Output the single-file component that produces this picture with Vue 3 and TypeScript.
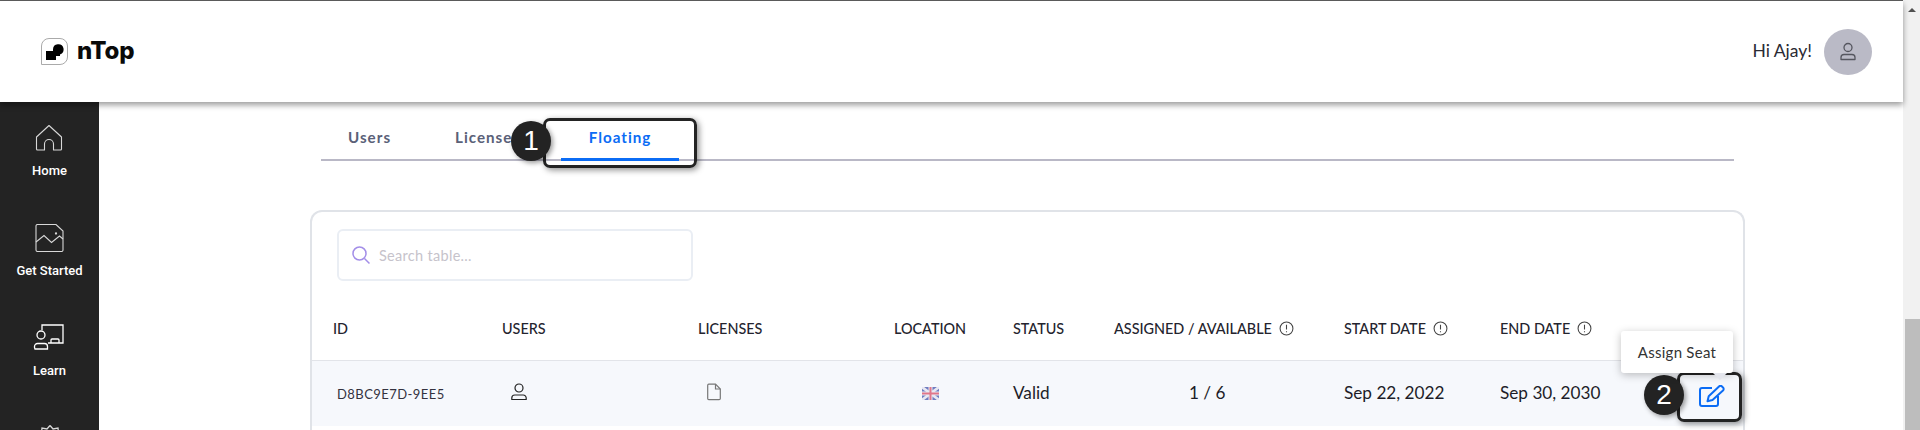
<script setup lang="ts">
const navItems = ['Home', 'Get Started', 'Learn']
</script>

<template>
  <div class="page">
    <div class="main">
      <header class="header">
        <div class="brand">
          <svg class="logo" width="27" height="27" viewBox="0 0 27 27">
            <path d="M.5 26.5V8A7.500 7.500 0 0 1 8 .5h11A7.500 7.500 0 0 1 26.500 8v11a7.500 7.500 0 0 1-7.500 7.500z" fill="#fff" stroke="#aaa" />
            <path d="M5 22V13h7V11.500a5.300 5.300 0 1 1 7 5V18h-4v4z" fill="#000" />
          </svg>
          <span class="brand-name">nTop</span>
        </div>
        <div class="user">
          <span class="hi">Hi Ajay!</span>
          <span class="avatar">
            <svg width="20" height="20" viewBox="0 0 20 20" fill="none" stroke="#55565f" stroke-width="1.300">
              <circle cx="10" cy="5.500" r="4" />
              <path d="M3 17.500v-2a3 3 0 0 1 3-3h8a3 3 0 0 1 3 3v2z" stroke-linejoin="round" />
            </svg>
          </span>
        </div>
      </header>
      <div class="below">
        <nav class="sidebar">
          <div v-for="(item, i) in navItems" :key="item" class="nav-item">
            <svg v-if="i === 0" width="28" height="28" viewBox="0 0 28 28" fill="none" stroke="#d8d8d8" stroke-width="1.100">
              <path d="M14 1.500 1.500 13v12a1 1 0 0 0 1 1h7V20a4.500 4.500 0 0 1 9 0v6h7a1 1 0 0 0 1-1V13z" stroke-linejoin="round" />
            </svg>
            <svg v-else-if="i === 1" width="29" height="28" viewBox="0 0 29 28" fill="none" stroke="#d8d8d8" stroke-width="1.100">
              <path d="M2.500.5h18.500l7 6.500v19a1.500 1.500 0 0 1-1.500 1.500H2.500A1.500 1.500 0 0 1 1 26V2A1.500 1.500 0 0 1 2.500.5z" />
              <path d="M1 18 9 11.500l7.500 7 8-6.500 3.500 3" />
              <circle cx="21" cy="9.500" r=".6" />
            </svg>
            <svg v-else width="32" height="28" viewBox="0 0 32 28" fill="none" stroke="#fff" stroke-width="1.300">
              <path d="M9 6V1h21v18h-15" />
              <circle cx="8" cy="11" r="4" />
              <path d="M1.500 23.500v-1a3 3 0 0 1 3-3h7a3 3 0 0 1 3 3v2.500H2z" />
              <path d="M18 19v-3a1 1 0 0 1 1-1h6a1 1 0 0 1 1 1v3" />
            </svg>
            <span class="nav-label">{{ item }}</span>
          </div>
          <div class="nav-item">
            <svg width="26" height="26" viewBox="0 0 26 26" fill="none" stroke="#d8d8d8" stroke-width="1.300">
              <path d="M13 1.500 16 5l5-1 .5 5 3 3-3 4" />
              <path d="M13 1.500 10 5 5 4 4.500 9l-3 3 3 4" />
            </svg>
          </div>
        </nav>
        <main class="content">
          <div class="tabs">
            <span class="tab">Users</span>
            <span class="tab tab-licenses">Licenses</span>
            <span class="tab tab-active">Floating</span>
          </div>
          <section class="card">
            <div class="search">
              <svg width="20" height="20" viewBox="0 0 20 20" fill="none" stroke="#a38ee8" stroke-width="1.500">
                <circle cx="8.500" cy="8.500" r="6.500" />
                <path d="m13.500 13.500 5 5" />
              </svg>
              <span class="placeholder">Search table...</span>
            </div>
            <div class="table-row table-head">
              <span>ID</span>
              <span>USERS</span>
              <span>LICENSES</span>
              <span>LOCATION</span>
              <span>STATUS</span>
              <span class="with-info">ASSIGNED / AVAILABLE
                <svg class="info" width="15" height="15" viewBox="0 0 14 14" fill="none" stroke="#444" stroke-width="1">
                  <circle cx="7" cy="7" r="6" />
                  <path d="M7 3.500v4.500M7 9.500v1" />
                </svg>
              </span>
              <span class="with-info">START DATE
                <svg class="info" width="15" height="15" viewBox="0 0 14 14" fill="none" stroke="#444" stroke-width="1">
                  <circle cx="7" cy="7" r="6" />
                  <path d="M7 3.500v4.500M7 9.500v1" />
                </svg>
              </span>
              <span class="with-info">END DATE
                <svg class="info" width="15" height="15" viewBox="0 0 14 14" fill="none" stroke="#444" stroke-width="1">
                  <circle cx="7" cy="7" r="6" />
                  <path d="M7 3.500v4.500M7 9.500v1" />
                </svg>
              </span>
            </div>
            <div class="table-row table-body">
              <span class="cell-id">D8BC9E7D-9EE5</span>
              <span class="cell-user">
                <svg width="18" height="18" viewBox="0 0 18 18" fill="none" stroke="#222" stroke-width="1.200">
                  <circle cx="9" cy="5" r="4" />
                  <path d="M1.800 16.500v-1.500a3 3 0 0 1 3-3h8.400a3 3 0 0 1 3 3v1.500z" stroke-linejoin="round" />
                </svg>
              </span>
              <span class="cell-file">
                <svg width="14" height="18" viewBox="0 0 14 17" fill="none" stroke="#777" stroke-width="1.200">
                  <path d="M1.800.700h6.700l4.800 4.800v9.500a1.200 1.200 0 0 1-1.200 1.200H1.800A1.200 1.200 0 0 1 .700 15V1.900A1.200 1.200 0 0 1 1.800.700z" />
                  <path d="M8.500.700v4.800h4.800" />
                </svg>
              </span>
              <span class="cell-flag">
                <svg width="17" height="13" viewBox="0 0 17 13">
                  <rect width="17" height="13" fill="#6f7cc0" />
                  <path d="M0 0l17 13M17 0 0 13" stroke="#e8e8f2" stroke-width="2.600" />
                  <path d="M8.500 0v13M0 6.500h17" stroke="#e8e8f2" stroke-width="4" />
                  <path d="M8.500 0v13M0 6.500h17" stroke="#e0768a" stroke-width="2" />
                </svg>
              </span>
              <span class="cell-text">Valid</span>
              <span class="cell-text cell-count">1 / 6</span>
              <span class="cell-text">Sep 22, 2022</span>
              <span class="cell-text">Sep 30, 2030</span>
            </div>
          </section>
        </main>
      </div>
      <span class="overlay cell-edit">
        <svg width="26" height="22" viewBox="0 0 26 22" fill="none" stroke="#0b6cf5" stroke-width="2">
          <path d="M13 3H3a2 2 0 0 0-2 2v14a2 2 0 0 0 2 2h14a2 2 0 0 0 2-2v-8" />
          <path d="M20 1.500a2 2 0 0 1 3 0l1 1a2 2 0 0 1 0 3L13.500 15l-5 1.200 1.200-5z" stroke-linejoin="round" />
        </svg>
      </span>
      <div class="overlay callout-tab"></div>
      <div class="overlay callout-edit"></div>
      <div class="overlay badge badge-one">1</div>
      <div class="overlay badge badge-two">2</div>
      <div class="overlay tooltip">Assign Seat<i class="tip-arrow"></i></div>
    </div>
    <aside class="scrollbar">
      <span class="arrow"></span>
      <span class="thumb"></span>
    </aside>
  </div>
</template>

<style>
html, body { margin: 0; background: #fff; overflow: hidden; }
</style>

<style scoped>
.page { display: flex; width: 1920px; height: 430px; overflow: hidden; font-family: Lato, "Liberation Sans", sans-serif; color: #222; background: #fff; }
.main { position: relative; flex: 1; min-width: 0; display: flex; flex-direction: column; border-top: 1px solid #5f5f5f; }
.header { position: relative; z-index: 2; flex: none; height: 101px; box-sizing: border-box; padding: 0 31px 0 41px; display: flex; align-items: center; justify-content: space-between; background: #fff; box-shadow: 0 3px 6px rgba(0, 0, 0, .4); }
.brand { display: flex; align-items: center; gap: 9px; }
.logo { display: block; margin-top: -1px; }
.brand-name { font: 800 24px Inter, Roboto, sans-serif; color: #0a0a0a; letter-spacing: -.2px; margin-top: -2px; }
.user { display: flex; align-items: center; gap: 12px; }
.hi { font-size: 17.500px; color: #2a2a33; margin-top: -3px; }
.avatar { width: 48px; height: 46px; border-radius: 50%; background: #babac6; display: flex; align-items: center; justify-content: center; }
.below { flex: 1; min-height: 0; display: flex; }
.sidebar { flex: none; width: 99px; background: #232323; display: flex; flex-direction: column; align-items: center; overflow: hidden; }
.nav-item { flex: none; height: 100px; box-sizing: border-box; padding-top: 22px; display: flex; flex-direction: column; align-items: center; gap: 11px; }
.nav-label { font: 500 13px/15px Roboto, sans-serif; color: #fff; }
.content { flex: 1; min-width: 0; padding-left: 222px; }
.tabs { width: 1413px; height: 59px; box-sizing: border-box; display: flex; align-items: flex-end; border-bottom: 2px solid #b9b8c6; }
.tab { height: 39px; box-sizing: border-box; font-size: 15.200px; font-weight: 700; letter-spacing: 1px; color: #5a6178; padding-top: 6px; margin-bottom: -2px; }
.tab:first-child { margin-left: 27px; width: 107px; }
.tab-licenses { width: 106px; }
.tab-active { width: 118px; text-align: center; color: #0b6cf5; border-bottom: 3px solid #0b6cf5; }
.card { width: 1435px; margin: 49px 0 0 -11px; height: 300px; box-sizing: border-box; border: 2px solid #e0e3e8; border-bottom: 0; border-radius: 12px 12px 0 0; padding-top: 17px; }
.search { width: 356px; height: 52px; margin-left: 25px; box-sizing: border-box; border: 2px solid #eaeef4; border-radius: 6px; padding: 0 12px; display: flex; align-items: center; gap: 8px; }
.placeholder { font-size: 14.500px; color: #c6c3cb; letter-spacing: .3px; }
.table-row { display: grid; grid-template-columns: 169px 196px 196px 119px 101px 230px 156px 1fr; }
.table-head { height: 80px; padding-left: 21px; box-sizing: border-box; align-items: center; border-bottom: 1px solid #e2e4e9; font-size: 14.400px; font-weight: 500; color: #24242e; padding-top: 16px; }
.with-info { display: flex; align-items: center; gap: 7px; }
.info { flex: none; }
.table-body { height: 65px; padding-left: 21px; padding-bottom: 3px; box-sizing: border-box; align-items: center; background: #f6f8fc; }
.cell-id { font-size: 13px; letter-spacing: .45px; color: #33323f; padding-left: 4px; padding-top: 3px; }
.cell-user { padding-left: 8px; display: flex; }
.cell-file { padding-left: 9px; display: flex; }
.cell-flag { padding-left: 28px; display: flex; padding-top: 3px; }
.cell-text { font-size: 17.200px; color: #1d1d28; }
.cell-count { padding-left: 75px; }
.overlay { position: absolute; z-index: 5; }
.cell-edit { left: 1699px; top: 384px; display: flex; }
.callout-tab { left: 543px; top: 117px; width: 154px; height: 50px; box-sizing: border-box; border: 3px solid #232323; border-radius: 7px; box-shadow: 2px 2px 6px rgba(0, 0, 0, .45); }
.callout-edit { left: 1677px; top: 371px; width: 65px; height: 50px; box-sizing: border-box; border: 3px solid #232323; border-radius: 7px; box-shadow: 2px 2px 6px rgba(0, 0, 0, .45); }
.badge { width: 40px; height: 40px; border-radius: 50%; background: #232323; color: #fff; display: flex; align-items: center; justify-content: center; font: 400 28px "Liberation Sans", Arial, sans-serif; box-shadow: 2px 2px 5px rgba(0, 0, 0, .4); }
.badge-one { left: 511px; top: 120px; }
.badge-two { left: 1644px; top: 374px; }
.tooltip { left: 1621px; top: 330px; width: 112px; height: 42px; display: flex; align-items: center; justify-content: center; background: #fff; border-radius: 3px; font-size: 15px; letter-spacing: .25px; color: #333; box-shadow: 0 2px 8px rgba(0, 0, 0, .25); }
.tip-arrow { position: absolute; left: 92px; top: 42px; border: 7px solid transparent; border-top-color: #e3e5ec; border-bottom: 0; }
.scrollbar { flex: none; width: 17px; height: 100%; background: #f1f1f1; display: flex; flex-direction: column; align-items: center; position: relative; }
.arrow { margin-top: 8px; width: 0; height: 0; border: 4px solid transparent; border-bottom: 4px solid #505050; border-top: 0; }
.thumb { position: absolute; left: 2px; right: 0; top: 319px; bottom: 0; background: #bdbdbd; }
</style>
